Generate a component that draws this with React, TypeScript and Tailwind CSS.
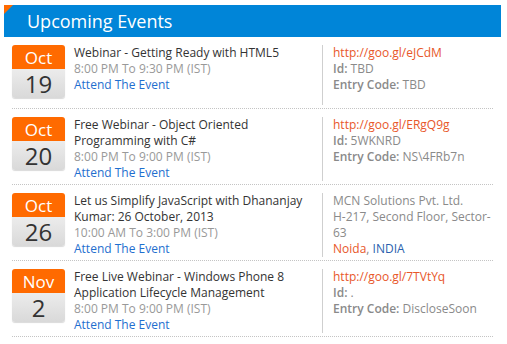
import type { ReactNode } from 'react';

type EventItem = {
  month: string;
  day: string;
  title: string;
  time: string;
  details: ReactNode;
};

const EVENTS: EventItem[] = [
  {
    month: 'Oct',
    day: '19',
    title: 'Webinar - Getting Ready with HTML5',
    time: '8:00 PM To 9:30 PM (IST)',
    details: <Online url="http://goo.gl/eJCdM" id="TBD" code="TBD" />,
  },
  {
    month: 'Oct',
    day: '20',
    title: 'Free Webinar - Object Oriented Programming with C#',
    time: '8:00 PM To 9:00 PM (IST)',
    details: <Online url="http://goo.gl/ERgQ9g" id="5WKNRD" code="NS\4FRb7n" />,
  },
  {
    month: 'Oct',
    day: '26',
    title: 'Let us Simplify JavaScript with Dhananjay Kumar: 26 October, 2013',
    time: '10:00 AM To 3:00 PM (IST)',
    details: (
      <div>
        <div>MCN Solutions Pvt. Ltd.</div>
        <div>H-217, Second Floor, Sector-63</div>
        <div>
          <span className="text-[#e8572a]">Noida</span>,{' '}
          <span className="text-[#2a5fae]">INDIA</span>
        </div>
      </div>
    ),
  },
  {
    month: 'Nov',
    day: '2',
    title: 'Free Live Webinar - Windows Phone 8 Application Lifecycle Management',
    time: '8:00 PM To 9:00 PM (IST)',
    details: <Online url="http://goo.gl/7TVtYq" id="." code="DiscloseSoon" />,
  },
];

function Online({ url, id, code }: { url: string; id: string; code: string }) {
  return (
    <div>
      <div className="text-[#e8572a]">{url}</div>
      <div>
        <span className="font-semibold">Id:</span> {id}
      </div>
      <div>
        <span className="font-semibold">Entry Code:</span> {code}
      </div>
    </div>
  );
}

function DateBadge({ month, day }: { month: string; day: string }) {
  return (
    <div className="w-[53px] shrink-0 self-start rounded-[3px] overflow-hidden shadow-[0_1px_1px_rgba(0,0,0,0.15)]">
      <div className="h-[24px] bg-[#ff6a00] text-white text-[17px] leading-none flex items-center justify-center">
        {month}
      </div>
      <div className="h-[29px] bg-gradient-to-b from-[#ececec] to-[#d9d9d9] text-[#333] text-[24px] leading-none flex items-center justify-center">
        {day}
      </div>
    </div>
  );
}

export default function App() {
  return (
    <div
      className="w-[507px] h-[344px] bg-white overflow-hidden pt-[5px]"
      style={{ fontFamily: '"Open Sans", "Noto Sans", sans-serif' }}
    >
      {/* Header */}
      <div className="relative mx-[4px] w-[497px] h-[32px] bg-[#0085d8] flex items-center pl-[23px]">
        <div className="absolute left-0 top-0 w-0 h-0 border-t-[9px] border-t-[#ff6a00] border-r-[9px] border-r-transparent" />
        <h1 className="text-white text-[18px] leading-none">Upcoming Events</h1>
      </div>

      {/* Event list */}
      <div className="px-[12px] w-[505px]">
        {EVENTS.map((ev, i) => (
          <div
            key={i}
            className="flex w-[481px] pt-[8px] pb-[3px] border-b border-dotted border-[#c4c4c4]"
          >
            <DateBadge month={ev.month} day={ev.day} />
            <div className="w-[257px] shrink-0 pl-[9px] pr-[6px] min-h-[60px] text-[12px] leading-[16px]">
              <div className="text-[#333]">{ev.title}</div>
              <div className="text-[#999]">{ev.time}</div>
              <div className="text-[#1f6fcf]">Attend The Event</div>
            </div>
            <div className="flex-1 border-l border-[#cfcfcf] pl-[10px] text-[12px] leading-[16px] text-[#8a8a8a]">
              <div className="w-[168px]">{ev.details}</div>
            </div>
          </div>
        ))}
      </div>
    </div>
  );
}
